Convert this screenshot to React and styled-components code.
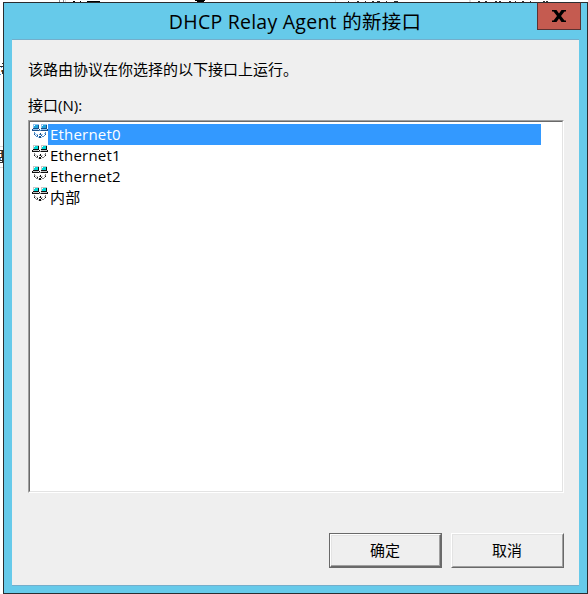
import React from 'react';
import styled, { createGlobalStyle } from 'styled-components';

const Global = createGlobalStyle`
  * { box-sizing: border-box; }
  html, body { margin: 0; padding: 0; background: #fff; overflow: hidden; }
`;

const Desktop = styled.div`
  position: relative;
  width: 588px;
  height: 594px;
  padding: 2px 0 0 3px;
  background: #fff;
  overflow: hidden;
  color: #000;
  font: 15px/20px "Open Sans", "Noto Sans CJK SC", sans-serif;
`;

const Backdrop = styled.svg`
  position: absolute;
  left: 0;
  top: 0;
`;

const Dialog = styled.section`
  position: relative;
  display: flex;
  flex-direction: column;
  width: 585px;
  height: 592px;
  padding: 0 8px 7px;
  border: 1px solid #2a2d30;
  background: #66caea;
`;

const TitleBar = styled.header`
  display: flex;
  justify-content: center;
  height: 36px;
  flex: none;
`;

const Title = styled.h1`
  margin: 5px 1px 0 0;
  font-size: 19.5px;
  letter-spacing: 0.25px;
  line-height: 28px;
  font-weight: 400;
  white-space: nowrap;
`;

const CloseButton = styled.button`
  position: absolute;
  top: -1px;
  right: 6px;
  display: flex;
  align-items: center;
  justify-content: center;
  width: 44px;
  height: 28px;
  padding: 0;
  border: 1px solid #5a3333;
  border-top-color: #2a2d30;
  background: #c55b50;
`;

const Body = styled.main`
  display: flex;
  flex-direction: column;
  height: 547px;
  padding: 19px 15px 0 16px;
  border-top: 1px solid #74aecb;
  border-bottom: 1px solid #74aecb;
  background: #efefef;
`;

const Label = styled.div`
  height: 20px;
  margin-bottom: ${(p) => p.$gap}px;
  white-space: nowrap;
`;

const ListFrame = styled.div`
  flex: none;
  height: 373px;
  border: 1px solid;
  border-color: #a0a0a0 #fff #fff #a0a0a0;
`;

const List = styled.ul`
  height: 100%;
  margin: 0;
  padding: 2px 21px 0 2px;
  border: 1px solid;
  border-color: #696969 #e3e3e3 #e3e3e3 #696969;
  background: #fff;
  list-style: none;
`;

const Row = styled.li`
  display: flex;
  height: 21px;
`;

const RowText = styled.span`
  flex: 1;
  padding-left: 2px;
  line-height: 21px;
  letter-spacing: 0.2px;
  color: ${(p) => (p.$selected ? '#fff' : '#000')};
  background: ${(p) => (p.$selected ? '#3399ff' : 'transparent')};
`;

const Actions = styled.footer`
  display: flex;
  justify-content: flex-end;
  gap: 9px;
  margin-top: 40px;
`;

const Button = styled.button`
  width: 113px;
  height: 35px;
  padding: 0;
  border: 1px solid;
  border-color: ${(p) => (p.$primary ? '#696969' : '#fff #696969 #696969 #fff')};
  background: #efefef;
  font: inherit;
  color: #000;
`;

const Face = styled.span`
  display: flex;
  align-items: center;
  justify-content: center;
  height: 100%;
  padding: 0 1px 2px 0;
  border: 1px solid;
  border-color: ${(p) => (p.$primary ? '#fff #696969 #696969 #fff' : '#e3e3e3 #a0a0a0 #a0a0a0 #e3e3e3')};
  box-shadow: ${(p) => (p.$primary ? 'inset -1px -1px #a0a0a0, inset 1px 1px #e3e3e3' : 'none')};
`;

const Glyph = styled.svg`
  flex: none;
  display: block;
`;

function NetworkIcon({ selected }) {
  const dark = selected ? '#1c4f86' : '#101010';
  const mid = selected ? '#4c8ccc' : '#808080';
  const light = selected ? '#8fc3f3' : '#c8c8c8';
  const screen = selected ? '#1fa5dc' : '#00d8d8';
  return (
    <Glyph width="16" height="16" viewBox="0 0 16 16" shapeRendering="crispEdges">
      <path fill={light} d="M1 0h6v4H1zM9 0h6v4H9zM1 5h5v1H1zM9 5h6v1H9z" />
      <path fill={screen} d="M2 1h4v3H2zM10 1h4v3h-4z" />
      <path fill="#fff" d="M2 1h1v1H2zM10 1h1v1h-1z" />
      <path fill={dark} d="M6 1h1v3H6zM14 1h1v3h-1zM1 4h6v1H1zM9 4h6v1H9zM0 5h1v1H0zM7 5h1v1H7zM15 5h1v1h-1zM0 6h7v1H0zM9 6h7v1H9z" />
      <path fill={mid} d="M7 6h2v1H7zM2 8h1v3H2zM13 8h1v3h-1zM3 11h1v1H3zM12 11h1v1h-1zM4 12h2v1H4zM10 12h2v1h-2zM7 10h1v1H7z" />
      <path fill={light} d="M3 9h1v1H3zM12 9h1v1h-1zM4 10h2v1H4zM9 10h2v1H9zM6 13h1v1H6zM9 13h1v1H9z" />
      <path fill={dark} d="M8 9h1v2H8zM5 11h1v1H5zM7 12h2v2H7zM9 11h1v1H9zM2 10h1v1H2zM13 10h1v1h-1z" />
    </Glyph>
  );
}

function BackgroundEdges() {
  return (
    <Backdrop width="588" height="594" viewBox="0 0 588 594" shapeRendering="crispEdges" aria-hidden="true">
      <path fill="#8a8f98" d="M59 0h1v2h-1zM63 0h1v2h-1z" />
      <path fill="#dcdcdc" d="M65 0h1v2h-1zM335 0h1v2h-1zM469 0h2v2h-2zM0 146h3v1H0zM0 167h3v1H0z" />
      <path fill="#000" d="M73 1h2v1h-2zM80 1h1v1h-1zM87 1h13v1H87zM195 0h10v1h-10zM197 1h7v1h-7z" />
      <path fill="#333" d="M348 1h1v1h-1zM357 1h2v1h-2zM365 1h1v1h-1zM372 1h2v1h-2zM377 1h3v1h-3zM386 1h1v1h-1zM394 1h4v1h-4zM478 1h2v1h-2zM485 1h2v1h-2zM495 1h2v1h-2zM499 1h2v1h-2zM509 1h2v1h-2zM515 1h1v1h-1zM522 1h2v1h-2zM530 1h1v1h-1zM543 1h2v1h-2zM546 1h2v1h-2z" />
      <path fill="#303030" d="M2 63h1v1H2zM0 66h3v1H0zM2 70h1v4H2zM0 150h3v1H0zM0 153h3v1H0zM0 157h3v1H0zM0 160h3v1H0zM0 162h3v1H0zM2 150h1v12H2z" />
      <path fill="#c47a38" d="M1 70h1v2H1zM1 151h1v2H1zM1 154h1v3H1z" />
      <path fill="#4796d5" d="M1 67h1v1H1zM0 74h1v1H0zM0 158h1v2H0z" />
    </Backdrop>
  );
}

const interfaces = ['Ethernet0', 'Ethernet1', 'Ethernet2', '内部'];

export default function App() {
  return (
    <>
      <Global />
      <Desktop>
        <BackgroundEdges />
        <Dialog>
          <TitleBar>
            <Title>DHCP Relay Agent 的新接口</Title>
            <CloseButton aria-label="关闭">
              <Glyph width="14" height="12" viewBox="0 0 14 12">
                <path d="M0 0h4.5L7 3.5 9.5 0H14v1.5h-1.5L9 6l3.5 4.5H14V12H9.500L7 8.500 4.500 12H0v-1.500h1.500L5 6 1.500 1.500H0z" />
              </Glyph>
            </CloseButton>
          </TitleBar>
          <Body>
            <Label $gap={16}>该路由协议在你选择的以下接口上运行。</Label>
            <Label $gap={5}>接口(N):</Label>
            <ListFrame>
              <List>
                {interfaces.map((name, i) => (
                  <Row key={name}>
                    <NetworkIcon selected={i === 0} />
                    <RowText $selected={i === 0}>{name}</RowText>
                  </Row>
                ))}
              </List>
            </ListFrame>
            <Actions>
              <Button $primary><Face $primary>确定</Face></Button>
              <Button><Face>取消</Face></Button>
            </Actions>
          </Body>
        </Dialog>
      </Desktop>
    </>
  );
}
